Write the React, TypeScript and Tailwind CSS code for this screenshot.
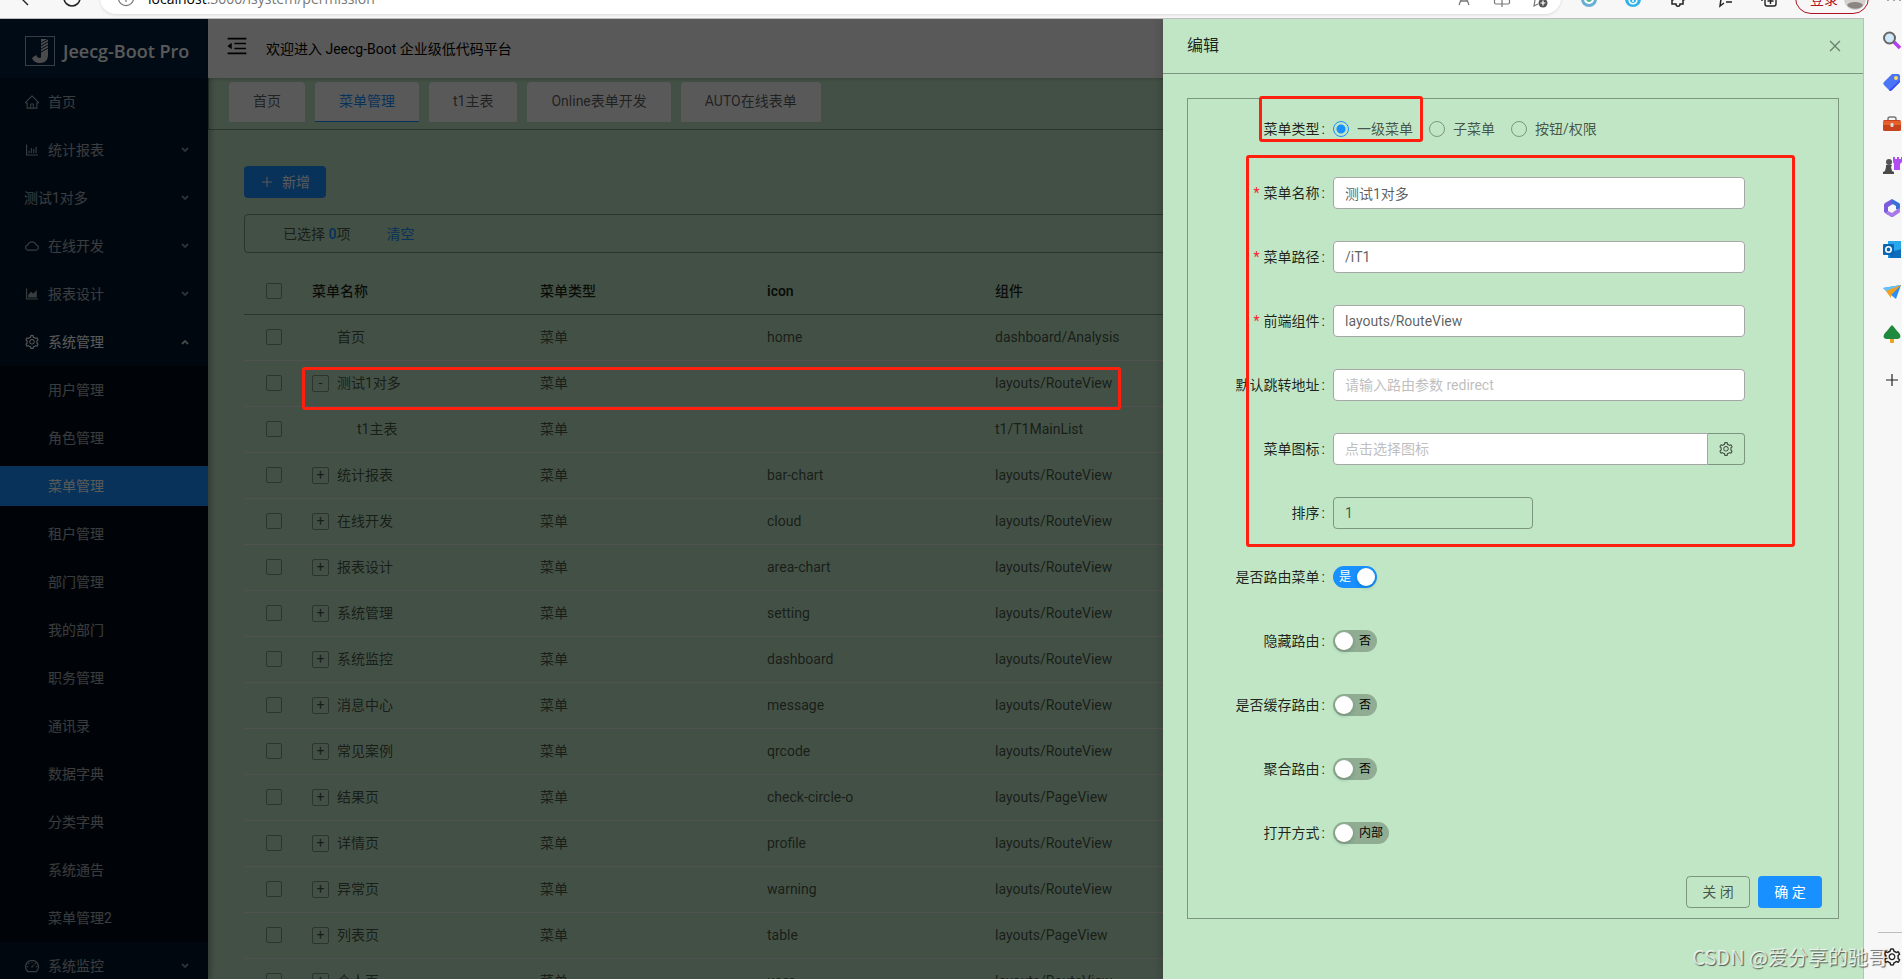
import React from "react";
import {
  AiOutlineAreaChart,
  AiOutlineBarChart,
  AiOutlineClose,
  AiOutlineCloud,
  AiOutlineDashboard,
  AiOutlineHome,
  AiOutlineMenuFold,
  AiOutlinePlus,
  AiOutlineSetting,
} from "react-icons/ai";

type MenuEntry = { label: string; icon?: React.ReactNode; leaf?: boolean };

const topMenu: MenuEntry[] = [
  { label: "首页", icon: <AiOutlineHome size={16} />, leaf: true },
  { label: "统计报表", icon: <AiOutlineBarChart size={16} /> },
  { label: "测试1对多" },
  { label: "在线开发", icon: <AiOutlineCloud size={16} /> },
  { label: "报表设计", icon: <AiOutlineAreaChart size={16} /> },
];

const systemMenu = [
  "用户管理",
  "角色管理",
  "菜单管理",
  "租户管理",
  "部门管理",
  "我的部门",
  "职务管理",
  "通讯录",
  "数据字典",
  "分类字典",
  "系统通告",
  "菜单管理2",
];

const tabs = ["首页", "菜单管理", "t1主表", "Online表单开发", "AUTO在线表单"];

type Row = { name: string; icon: string; component: string; expand?: "+" | "-"; child?: boolean };

const rows: Row[] = [
  { name: "首页", icon: "home", component: "dashboard/Analysis" },
  { name: "测试1对多", icon: "", component: "layouts/RouteView", expand: "-" },
  { name: "t1主表", icon: "", component: "t1/T1MainList", child: true },
  { name: "统计报表", icon: "bar-chart", component: "layouts/RouteView", expand: "+" },
  { name: "在线开发", icon: "cloud", component: "layouts/RouteView", expand: "+" },
  { name: "报表设计", icon: "area-chart", component: "layouts/RouteView", expand: "+" },
  { name: "系统管理", icon: "setting", component: "layouts/RouteView", expand: "+" },
  { name: "系统监控", icon: "dashboard", component: "layouts/RouteView", expand: "+" },
  { name: "消息中心", icon: "message", component: "layouts/RouteView", expand: "+" },
  { name: "常见案例", icon: "qrcode", component: "layouts/RouteView", expand: "+" },
  { name: "结果页", icon: "check-circle-o", component: "layouts/PageView", expand: "+" },
  { name: "详情页", icon: "profile", component: "layouts/RouteView", expand: "+" },
  { name: "异常页", icon: "warning", component: "layouts/RouteView", expand: "+" },
  { name: "列表页", icon: "table", component: "layouts/PageView", expand: "+" },
  { name: "个人页", icon: "user", component: "layouts/RouteView", expand: "+" },
];

const checkboxClass =
  "block size-4 appearance-none rounded-[2px] border border-black/35 bg-transparent";

function BrowserBar() {
  return (
    <div className="flex h-[18px] shrink-0 flex-col justify-end overflow-hidden bg-[#f7f7f7]">
      <div className="mb-1 flex h-8 shrink-0 items-center">
        <div className="flex w-[100px] shrink-0 items-center">
          <svg className="ml-4 shrink-0" width="20" height="20" viewBox="0 0 20 20" fill="none" stroke="#222" strokeWidth="1.4">
            <path d="M11 2 4 9l8 8" />
          </svg>
          <svg className="ml-6 shrink-0" width="24" height="20" viewBox="0 0 24 20" fill="none" stroke="#222" strokeWidth="1.6">
            <circle cx="12" cy="10" r="8" />
          </svg>
        </div>
        <div className="flex h-8 min-w-0 flex-1 items-center rounded-2xl bg-white shadow-[0_1px_3px_rgba(0,0,0,0.12)]">
          <svg className="ml-4 shrink-0" width="20" height="20" viewBox="0 0 20 20" fill="none" stroke="#777" strokeWidth="1.2">
            <circle cx="10" cy="10" r="7.6" />
            <path d="M10 9v5M10 6v1" />
          </svg>
          <span className="ml-3 flex-1 pt-0.5 font-['Open_Sans',sans-serif] text-sm text-[#777]">
            <span className="text-black">localhost</span>:3000/isystem/permission
          </span>
          <svg className="mr-5 shrink-0" width="18" height="20" viewBox="0 0 18 20" fill="none" stroke="#777" strokeWidth="1.3">
            <path d="M4 17 9 4l5 13M6 13h6" />
          </svg>
          <svg className="mr-5 shrink-0" width="18" height="20" viewBox="0 0 18 20" fill="none" stroke="#777" strokeWidth="1.2">
            <path d="M9 3v16M9 16H3a1.500 1.500 0 0 1-1.500-1.500V4M9 16h6a1.500 1.500 0 0 0 1.500-1.500V4" />
          </svg>
          <svg className="mr-3 shrink-0" width="18" height="20" viewBox="0 0 18 20" fill="none">
            <path d="M4 4v8l-1 6 4-2" stroke="#777" strokeWidth="1.2" />
            <circle cx="12" cy="15" r="4.500" fill="#555" />
            <path d="M12 12.500v5M9.500 15h5" stroke="#fff" strokeWidth="1.2" />
          </svg>
        </div>
        <div className="flex w-[341px] shrink-0 items-center pl-5">
          <svg className="shrink-0" width="16" height="20" viewBox="0 0 16 20">
            <circle cx="8" cy="11" r="8" fill="#6aaed6" />
            <circle cx="8" cy="11" r="5" fill="#fff" />
            <circle cx="8" cy="11" r="3" fill="#57b894" />
          </svg>
          <svg className="ml-7 shrink-0" width="16" height="20" viewBox="0 0 16 20">
            <circle cx="8" cy="11" r="8" fill="#2fb2ea" />
            <path d="M4 12c1 5 7 5 8 0M8 10v4" stroke="#fff" strokeWidth="1.5" fill="none" />
          </svg>
          <svg className="ml-7 shrink-0" width="18" height="20" viewBox="0 0 18 20" fill="none" stroke="#222" strokeWidth="1.5">
            <path d="M3 4v4c3 0 3 4 0 4v4h4c0 3 4 3 4 0h3v-4c3 0 3-4 0-4V4z" />
          </svg>
          <span className="ml-3.5 h-5 w-px bg-[#ccc]" />
          <svg className="ml-4 shrink-0" width="18" height="20" viewBox="0 0 18 20" fill="none" stroke="#222" strokeWidth="1.5">
            <path d="M4 4v7l-1 7 4-3M9 14h6M11 9h5" />
          </svg>
          <svg className="ml-6 shrink-0" width="20" height="20" viewBox="0 0 20 20" fill="none" stroke="#222" strokeWidth="1.4">
            <rect x="6" y="7" width="11" height="11" rx="2" />
            <path d="M11.500 10v6M8.500 13h6M3 13V4" />
          </svg>
          <button className="ml-4 flex h-8 w-[74px] shrink-0 items-center justify-between rounded-2xl border border-[#b01020] pt-0.5 pr-0.5 pl-3.5 text-sm whitespace-nowrap text-[#b01020]">
            登录
            <svg width="22" height="22" viewBox="0 0 22 22">
              <circle cx="11" cy="11" r="11" fill="#d4d1cf" />
              <circle cx="11" cy="8" r="4" fill="#8a8583" />
              <path d="M3 17c2-4 14-4 16 0-2 5-13 5-16 0z" fill="#8a8583" />
            </svg>
          </button>
          <svg className="ml-4 shrink-0" width="18" height="20" viewBox="0 0 18 20" fill="#888">
            <circle cx="3" cy="12" r="1" />
            <circle cx="9" cy="12" r="1" />
            <circle cx="15" cy="12" r="1" />
          </svg>
        </div>
      </div>
    </div>
  );
}

function EdgeBar() {
  return (
    <aside className="flex w-[38px] shrink-0 flex-col bg-[#f7f7f7]">
      <div className="flex flex-1 flex-col items-end gap-[22px] pt-3">
        <svg width="20" height="20" viewBox="0 0 20 20">
          <path d="m12 12 6 6" stroke="#b63cf0" strokeWidth="3.500" />
          <circle cx="7.500" cy="8" r="5.500" fill="#cfe9fb" stroke="#666" strokeWidth="2" />
        </svg>
        <svg width="20" height="20" viewBox="0 0 20 20">
          <path d="M10 2h6a2 2 0 0 1 2 2v6l-8 8a2 2 0 0 1-3 0l-5-5a2 2 0 0 1 0-3z" fill="#4a75f5" />
          <path d="M18 8v2l-8 8a2 2 0 0 1-3 0z" fill="#3b4df0" />
          <circle cx="14" cy="6" r="2" fill="#ffd95a" />
        </svg>
        <svg width="20" height="20" viewBox="0 0 20 20">
          <path d="M6 6V5a2 2 0 0 1 2-2h4a2 2 0 0 1 2 2v1" fill="none" stroke="#777" strokeWidth="1.500" />
          <rect x="1" y="6" width="18" height="11" rx="1.500" fill="#c8421b" />
          <path d="M1 7h18v4H1z" fill="#e5602b" />
          <rect x="8.500" y="9" width="3" height="4" rx="1" fill="#ddd" />
        </svg>
        <svg width="20" height="20" viewBox="0 0 20 20">
          <path d="M11 1h2v2h2V1h2v2h2V1h1v5l-2 2v6h-6V8l-1-2z" fill="#b04df2" />
          <circle cx="7" cy="6" r="3" fill="#555" />
          <path d="M4 9h6l-1 2 1 4 2 1v2H1v-2l2-1 1-4z" fill="#4a4a4a" />
        </svg>
        <svg width="20" height="20" viewBox="0 0 20 20">
          <path d="M10 1 3 5a3 3 0 0 0-1 2v7l4 3V9l5-3z" fill="#7a5be0" />
          <path d="m10 1 7 4a2 2 0 0 1 1 2v6l-4-2V8l-5-3z" fill="#3a6fd8" />
          <path d="M18 10v3a2 2 0 0 1-1 2l-6 4h-2l-6-4 3-2 4 2 4-3z" fill="#a67be8" />
        </svg>
        <svg width="20" height="20" viewBox="0 0 20 20">
          <rect x="6" y="1" width="13" height="9" fill="#28a8ea" />
          <path d="M6 10h13v8H6z" fill="#1490df" />
          <path d="m8 13 11-4v9H8z" fill="#0f6cbd" />
          <rect x="1" y="4" width="11" height="11" rx="1" fill="#0a64b4" />
          <circle cx="6.500" cy="9.500" r="2.700" fill="none" stroke="#fff" strokeWidth="1.600" />
        </svg>
        <svg width="20" height="20" viewBox="0 0 20 20">
          <path d="m1 6 18-3-5 14-5-4z" fill="#2f8ff0" />
          <path d="m1 6 18-3L6 11z" fill="#63c0fa" />
          <path d="m4 9 15-6L9 13v3l-3-4z" fill="#f3a01c" />
        </svg>
        <svg width="20" height="20" viewBox="0 0 20 20">
          <rect x="8" y="14" width="4" height="5" rx="1" fill="#f0a21e" />
          <path d="M10 1c3 3 4 5 7 8 3 4 1 6-3 6H6c-4 0-6-2-3-6 3-3 4-5 7-8z" fill="#1f8a3d" />
        </svg>
        <svg className="mt-1" width="20" height="20" viewBox="0 0 20 20" stroke="#222" strokeWidth="1.200">
          <path d="M10 4v12M4 10h12" />
        </svg>
      </div>
      <div className="ml-3.5 flex justify-end border-t border-[#bdbdbd] pt-3.5 pb-3">
        <AiOutlineSetting size={20} className="text-[#222]" />
      </div>
    </aside>
  );
}

function Arrow({ up }: { up?: boolean }) {
  return (
    <svg className="mr-[19px] ml-auto opacity-80" width="8" height="6" viewBox="0 0 8 6" fill="none" stroke="currentColor" strokeWidth="1.8">
      <path d={up ? "m1 5 3-3 3 3" : "m1 1 3 3 3-3"} />
    </svg>
  );
}

function MenuItem({ label, icon, leaf }: MenuEntry) {
  return (
    <li className="flex h-12 items-center pl-6">
      {icon && <span className="mr-2">{icon}</span>}
      {label}
      {!leaf && <Arrow />}
    </li>
  );
}

function Sidebar() {
  return (
    <nav className="w-52 shrink-0 bg-[#001529] text-sm leading-10 text-white/65 shadow-[2px_0_6px_rgba(0,21,41,0.35)]">
      <div className="flex h-[59px] items-center bg-[#002140] pt-1 pl-[25px] text-white">
        <svg width="30" height="30" viewBox="0 0 30 30">
          <rect x="0.500" y="0.500" width="29" height="29" fill="none" stroke="#9fb0c0" />
          <path d="M16 3h7v16c0 5-3 8-8 8-4 0-7-2-8-5l4-3c1 2 2 3 4 3 1 0 1-1 1-3z" fill="#d8d8d8" />
          <path d="m16 7 7-4M16 10l7-4M16 13l7-4M16 16l7-4" stroke="#002140" strokeWidth="1" />
        </svg>
        <h1 className="ml-2 font-['Open_Sans',sans-serif] text-lg font-semibold whitespace-nowrap">Jeecg-Boot Pro</h1>
      </div>
      <ul>
        {topMenu.map((item) => (
          <MenuItem key={item.label} {...item} />
        ))}
        <li>
          <div className="flex h-12 items-center pl-6 text-white">
            <AiOutlineSetting size={16} className="mr-2" />
            系统管理
            <Arrow up />
          </div>
          <ul className="bg-[#000c17]">
            {systemMenu.map((label) => (
              <li key={label} className="py-1">
                <a
                  href="#"
                  className={`block h-10 pl-12 ${label === "菜单管理" ? "bg-[#1890ff] text-white" : ""}`}
                >
                  {label}
                </a>
              </li>
            ))}
          </ul>
        </li>
        <MenuItem label="系统监控" icon={<AiOutlineDashboard size={16} />} />
      </ul>
    </nav>
  );
}

function MenuTable() {
  return (
    <table className="mt-[15px] w-full table-fixed border-collapse text-left">
      <thead>
        <tr className="h-[46px] border-b border-black/35 text-black/85">
          <th className="w-[60px] pl-[22px]">
            <input type="checkbox" aria-label="全选" className={checkboxClass} />
          </th>
          <th className="w-[228px] px-2 font-medium">菜单名称</th>
          <th className="w-[227px] px-2 font-medium">菜单类型</th>
          <th className="w-[228px] px-2 font-semibold">icon</th>
          <th className="px-2 font-medium">组件</th>
        </tr>
      </thead>
      <tbody>
        {rows.map((row) => (
          <tr key={row.name} className="h-[46px] border-b border-[#e8e8e8]">
            <td className="pl-[22px]">
              <input type="checkbox" aria-label={row.name} className={checkboxClass} />
            </td>
            <td className="px-2">
              <div className={`flex items-center ${row.child ? "pl-5" : ""}`}>
                {row.expand ? (
                  <button className="mr-2 flex size-[17px] items-center justify-center rounded-[2px] border border-black/35 leading-none">
                    {row.expand}
                  </button>
                ) : (
                  <span className="mr-2 w-[17px]" />
                )}
                {row.name}
              </div>
            </td>
            <td className="px-2">菜单</td>
            <td className="px-2">{row.icon}</td>
            <td className="px-2">{row.component}</td>
          </tr>
        ))}
      </tbody>
    </table>
  );
}

function PageContent() {
  return (
    <div className="flex min-w-0 flex-1 flex-col">
      <header className="flex h-[59px] shrink-0 items-center bg-white pl-[17px] text-black shadow-[0_1px_4px_rgba(0,21,41,0.2)]">
        <AiOutlineMenuFold size={24} className="mb-1.5" />
        <span className="ml-[17px]">欢迎进入 Jeecg-Boot 企业级低代码平台</span>
      </header>
      <div className="flex h-[52px] shrink-0 gap-2.5 border-b border-l border-black/35 pt-1 pl-5">
        {tabs.map((tab) => (
          <button
            key={tab}
            className={`h-10 rounded-t px-6 pb-0.5 ${
              tab === "菜单管理" ? "border-b border-[#1890ff] bg-white text-[#1890ff]" : "bg-white"
            }`}
          >
            {tab}
          </button>
        ))}
      </div>
      <main className="px-9 pt-9">
        <button className="flex h-8 items-center gap-2 rounded bg-[#1890ff] px-4 text-white">
          <AiOutlinePlus size={14} />
          新增
        </button>
        <div className="mt-4 flex h-[39px] items-center rounded border border-black/35 pl-[38px]">
          已选择&nbsp;<b className="font-semibold text-[#1890ff]">0</b>项
          <a href="#" className="ml-9 text-[#1890ff]">
            清空
          </a>
        </div>
        <MenuTable />
      </main>
    </div>
  );
}

function FormRow({
  label,
  required,
  htmlFor,
  children,
}: {
  label: string;
  required?: boolean;
  htmlFor?: string;
  children: React.ReactNode;
}) {
  return (
    <div className="mb-8 flex h-8 items-center">
      <label htmlFor={htmlFor} className="w-[145px] shrink-0 pr-2 text-right whitespace-nowrap text-black/85">
        {required && <span className="mr-1 text-[#f5222d]">*</span>}
        {label}
        <span className="ml-0.5">:</span>
      </label>
      {children}
    </div>
  );
}

const inputClass =
  "h-8 min-w-0 flex-1 rounded border border-[#a6a6a6] bg-white px-[11px] text-sm placeholder:text-[#bfbfbf]";

function Switch({ id, text, on }: { id: string; text: string; on?: boolean }) {
  return (
    <button
      id={id}
      role="switch"
      aria-checked={!!on}
      className={`flex h-[22px] min-w-11 items-center rounded-full p-0.5 text-xs leading-none ${
        on ? "flex-row-reverse bg-[#1890ff] text-white" : "bg-black/25 text-black"
      }`}
    >
      <span className="size-[18px] rounded-full bg-white shadow-[0_2px_4px_rgba(0,35,11,0.2)]" />
      <span className={on ? "mr-1.5" : "mr-1 ml-1.5"}>{text}</span>
    </button>
  );
}

const radios = ["一级菜单", "子菜单", "按钮/权限"];

function EditDrawer() {
  return (
    <section className="absolute inset-y-0 right-0 w-[700px] bg-[#c1e6c5] shadow-[-2px_0_8px_rgba(0,0,0,0.15)]">
      <div className="flex h-[55px] items-center justify-between border-b border-black/35 px-6">
        <h2 className="text-base text-black/85">编辑</h2>
        <button aria-label="关闭" className="-mr-1 text-black/45">
          <AiOutlineClose size={16} />
        </button>
      </div>
      <div className="p-6">
        <form className="relative border border-black/35 pt-[14px] pb-2.5" onSubmit={(e) => e.preventDefault()}>
          <FormRow label="菜单类型">
            {radios.map((text, i) => (
              <label key={text} className="mr-2 flex items-center">
                <input
                  type="radio"
                  name="menuType"
                  defaultChecked={i === 0}
                  className="size-4 appearance-none rounded-full border border-black/35 checked:border-[#1890ff] checked:bg-[radial-gradient(circle,#1890ff_4px,transparent_5px)]"
                />
                <span className="px-2">{text}</span>
              </label>
            ))}
          </FormRow>
          <FormRow label="菜单名称" required htmlFor="name">
            <input id="name" className={`${inputClass} mr-[93px]`} defaultValue="测试1对多" />
          </FormRow>
          <FormRow label="菜单路径" required htmlFor="url">
            <input id="url" className={`${inputClass} mr-[93px]`} defaultValue="/iT1" />
          </FormRow>
          <FormRow label="前端组件" required htmlFor="component">
            <input id="component" className={`${inputClass} mr-[93px]`} defaultValue="layouts/RouteView" />
          </FormRow>
          <FormRow label="默认跳转地址" htmlFor="redirect">
            <input id="redirect" className={`${inputClass} mr-[93px]`} placeholder="请输入路由参数 redirect" />
          </FormRow>
          <FormRow label="菜单图标" htmlFor="icon">
            <input id="icon" className={`${inputClass} rounded-r-none`} placeholder="点击选择图标" />
            <button
              aria-label="选择图标"
              className="mr-[93px] flex h-8 w-[37px] items-center justify-center rounded-r border border-l-0 border-black/35"
            >
              <AiOutlineSetting size={16} />
            </button>
          </FormRow>
          <FormRow label="排序" htmlFor="sort">
            <input
              id="sort"
              className="h-8 w-[200px] rounded border border-black/35 bg-transparent px-[11px]"
              defaultValue="1"
            />
          </FormRow>
          <FormRow label="是否路由菜单" htmlFor="route">
            <Switch id="route" text="是" on />
          </FormRow>
          <FormRow label="隐藏路由" htmlFor="hidden">
            <Switch id="hidden" text="否" />
          </FormRow>
          <FormRow label="是否缓存路由" htmlFor="keepAlive">
            <Switch id="keepAlive" text="否" />
          </FormRow>
          <FormRow label="聚合路由" htmlFor="alwaysShow">
            <Switch id="alwaysShow" text="否" />
          </FormRow>
          <FormRow label="打开方式" htmlFor="openType">
            <Switch id="openType" text="内部" />
          </FormRow>
          <div className="-mt-[5px] flex justify-end gap-2 pr-4">
            <button className="h-8 w-16 rounded border border-black/35">关 闭</button>
            <button className="h-8 w-16 rounded bg-[#1890ff] text-white">确 定</button>
          </div>
          {/* highlight frames */}
          <div className="pointer-events-none absolute -top-[3px] left-[71px] h-[46px] w-[164px] rounded-[3px] border-3 border-[#ff1f0f]" />
          <div className="pointer-events-none absolute top-14 left-[58px] h-[392px] w-[549px] rounded-[3px] border-3 border-[#ff1f0f]" />
        </form>
      </div>
    </section>
  );
}

export default function App() {
  return (
    <div className="relative flex h-screen flex-col overflow-hidden font-[Roboto,'Noto_Sans_CJK_SC',sans-serif] text-sm text-black/65">
      <BrowserBar />
      <div className="flex min-h-0 flex-1">
        <div className="relative flex min-w-0 flex-1 overflow-hidden border-t border-r border-[#bdbdbd] bg-[#c1e6c5]">
          <Sidebar />
          <PageContent />
          <div className="absolute inset-0 bg-black/65" />
          <div className="absolute top-[348px] left-[302px] h-[43px] w-[819px] rounded-[3px] border-3 border-[#ff1f0f]" />
          <EditDrawer />
        </div>
        <EdgeBar />
      </div>
      <div className="absolute right-3.5 bottom-2 font-['Noto_Sans_CJK_SC',sans-serif] text-xl text-white/75 [text-shadow:1px_1px_1px_rgba(0,0,0,0.6)]">
        CSDN @爱分享的驰哥
      </div>
    </div>
  );
}
